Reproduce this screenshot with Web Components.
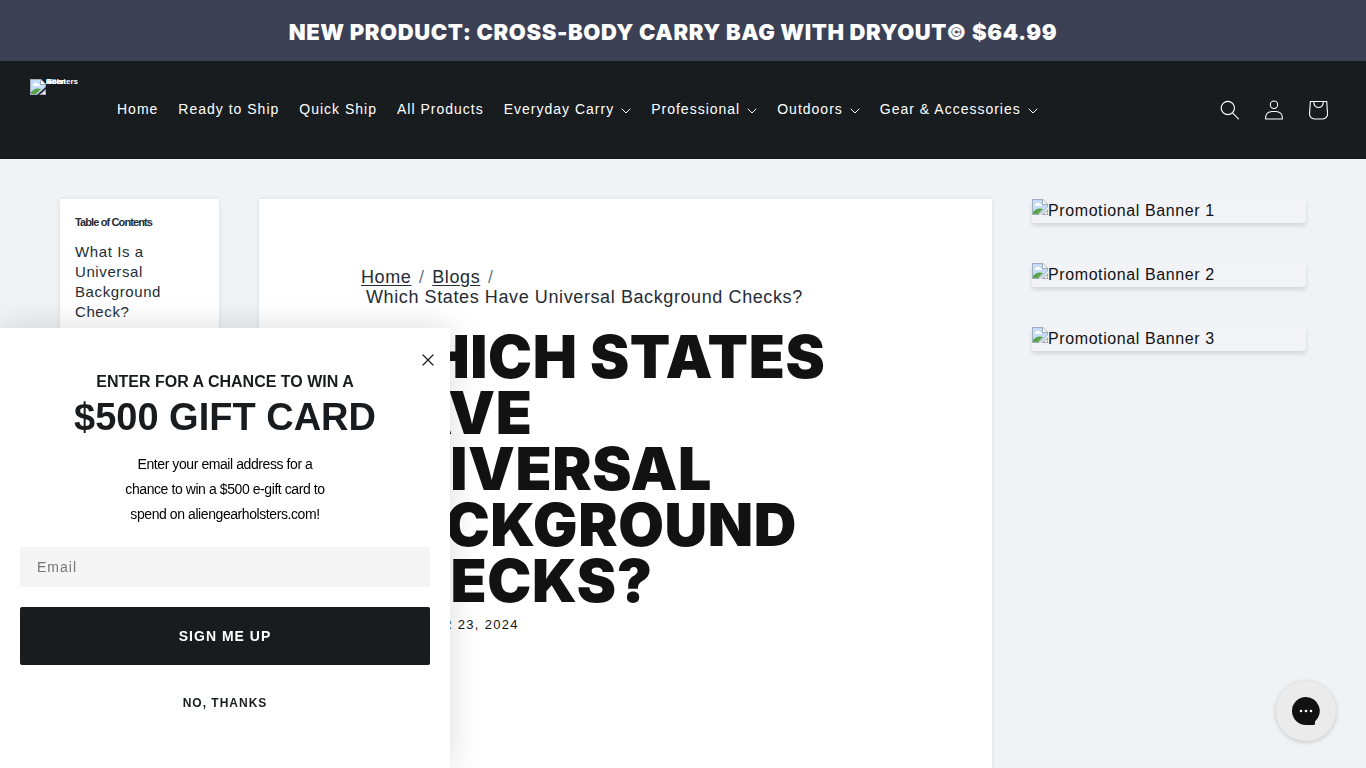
<!DOCTYPE html>
<html lang="en">
<head>
<meta charset="utf-8">
<meta name="viewport" content="width=device-width, initial-scale=1">
<title>Which States Have Universal Background Checks?</title>
<style>
	:root {
		--ink: #181c1f;
		--slate: #3b4055;
		--page: #f0f3f6;
		--text: #242c36;
		--font-body: "Liberation Sans", Arial, sans-serif;
		--font-heading: Inter, "Arial Black", sans-serif;
	}
	body {
		margin: 0;
		background: var(--page);
		color: var(--text);
		font-family: var(--font-body);
		font-size: 15px;
		letter-spacing: 0.04em;
		overflow: hidden;
	}
	.layout {
		display: grid;
		grid-template-columns: 159px minmax(0, 1fr) 274px;
		gap: 40px;
		padding: 40px 60px 0;
	}
	.banners {
		display: flex;
		flex-direction: column;
		gap: 40px;
	}
</style>
</head>
<body>
<announcement-bar>New product: Cross-body carry bag with DryOut© $64.99</announcement-bar>
<site-header>
	<nav-item>Home</nav-item>
	<nav-item>Ready to Ship</nav-item>
	<nav-item>Quick Ship</nav-item>
	<nav-item>All Products</nav-item>
	<nav-item menu>Everyday Carry</nav-item>
	<nav-item menu>Professional</nav-item>
	<nav-item menu>Outdoors</nav-item>
	<nav-item menu>Gear &amp; Accessories</nav-item>
</site-header>
<main class="layout">
	<table-of-contents>What Is a Universal Background Check?</table-of-contents>
	<blog-article date="September 23, 2024">Which States Have Universal Background Checks?</blog-article>
	<aside class="banners">
		<promo-banner>Promotional Banner 1</promo-banner>
		<promo-banner>Promotional Banner 2</promo-banner>
		<promo-banner>Promotional Banner 3</promo-banner>
	</aside>
</main>
<signup-popup></signup-popup>
<chat-launcher></chat-launcher>

<script>
class BaseElement extends HTMLElement {
	constructor() {
		super();

		this.attachShadow({ mode: "open" });
		this.shadowRoot.appendChild(this.constructor.template.content.cloneNode(true));
	}

	static get template() {
		const tmpl = document.createElement("template");
		tmpl.innerHTML = this.markup;
		return tmpl;
	}
}

class MissingImageElement extends BaseElement {
	static get markup() {
		return /* html */`
		<style>
		:host {
			display: block;
			flex: none;
			width: 16px;
			height: 16px;
		}
		svg {
			display: block;
		}
		</style>
		<svg width="16" height="16" viewBox="0 0 16 16" aria-hidden="true">
			<path d="M0 0h11l5 5v3l-9 8H0z" fill="#a3adbd"/>
			<path d="M1 1h9v5h5v2l-8 7H1z" fill="#c5dcf8"/>
			<path d="M11 1l4 4h-4z" fill="#fff"/>
			<path d="M3 6q0-2 2-2 2-1 3 1 2 0 2 2H3z" fill="#fff"/>
			<path d="M1 15v-2q4-5 10-3l-5 5z" fill="#55a344"/>
			<path d="M16 10v6H9z" fill="#a3adbd"/>
			<path d="M15 12v3h-3z" fill="#fff"/>
		</svg>
		`;
	}
}

class AnnouncementBarElement extends BaseElement {
	static get markup() {
		return /* html */`
		<style>
		:host {
			display: block;
			padding: 18px 20px 14px 0;
			background: var(--slate);
			color: #fff;
			text-align: center;
		}
		p {
			margin: 0;
			font: 900 22px/29px var(--font-heading);
			text-transform: uppercase;
		}
		</style>
		<p><slot></slot></p>
		`;
	}
}

class SiteHeaderElement extends BaseElement {
	static get markup() {
		return /* html */`
		<style>
		:host {
			display: flex;
			align-items: center;
			box-sizing: border-box;
			min-height: 98px;
			padding: 0 26px 0 30px;
			background: var(--ink);
			color: #fff;
		}
		.logo {
			display: flex;
			align-self: flex-start;
			width: 47px;
			margin: 18px 30px 0 0;
			color: #fff;
			font-size: 8px;
			font-weight: bold;
			line-height: 0;
			letter-spacing: 0;
			text-decoration: none;
		}
		.logo span {
			padding-top: 3px;
		}
		nav {
			display: flex;
			flex: 1;
		}
		.icons {
			display: flex;
		}
		button {
			display: grid;
			place-items: center;
			width: 44px;
			height: 44px;
			padding: 0;
			border: 0;
			background: none;
			color: inherit;
		}
		svg {
			fill: currentColor;
		}
		</style>
		<a class="logo" href="#"><missing-image></missing-image><span>Alien Gear Holsters</span></a>
		<nav><slot></slot></nav>
		<div class="icons">
			<button aria-label="Search">
				<svg width="20" height="20" viewBox="0 0 18 19"><path fill-rule="evenodd" d="M11.03 11.68A5.784 5.784 0 1 1 2.85 3.5a5.784 5.784 0 0 1 8.18 8.18zm.26 1.12a6.78 6.78 0 1 1 .72-.7l5.4 5.4a.5.5 0 1 1-.71.7l-5.41-5.4z"/></svg>
			</button>
			<button aria-label="Log in">
				<svg width="20" height="20" viewBox="0 0 18 19"><path fill-rule="evenodd" d="M6 4.5a3 3 0 1 1 6 0 3 3 0 0 1-6 0zm3-4a4 4 0 1 0 0 8 4 4 0 0 0 0-8zm5.58 12.15c1.12.82 1.83 2.24 1.91 4.85H1.51c.08-2.6.79-4.03 1.9-4.85C4.66 11.75 6.5 11.5 9 11.5s4.35.26 5.58 1.15zM9 10.5c-2.5 0-4.65.24-6.17 1.35C1.27 12.98.5 14.93.5 18v.5h17V18c0-3.07-.77-5.02-2.33-6.15-1.52-1.1-3.67-1.35-6.17-1.35z"/></svg>
			</button>
			<button aria-label="Cart">
				<svg width="44" height="44" viewBox="0 0 40 40"><path fill-rule="evenodd" d="M15.75 11.8h-3.16l-.77 11.6a5 5 0 0 0 4.99 5.34h7.38a5 5 0 0 0 4.99-5.33L28.4 11.8zm0 1h-2.22l-.71 10.67a4 4 0 0 0 3.99 4.27h7.38a4 4 0 0 0 4-4.27l-.72-10.67h-2.22v.63a4.75 4.75 0 1 1-9.5 0zm8.5 0h-7.5v.63a3.75 3.75 0 1 0 7.5 0z"/></svg>
			</button>
		</div>
		`;
	}
}

class NavItemElement extends BaseElement {
	static get markup() {
		return /* html */`
		<style>
		:host {
			display: block;
		}
		a {
			display: flex;
			align-items: center;
			gap: 7px;
			padding: 0 10px 2px;
			color: #fff;
			font-size: 14px;
			line-height: 18px;
			letter-spacing: 1px;
			text-decoration: none;
			white-space: nowrap;
		}
		svg {
			display: none;
			margin-top: 3px;
		}
		:host([menu]) svg {
			display: block;
		}
		</style>
		<a href="#"><slot></slot><svg width="10" height="6" viewBox="0 0 10 6" aria-hidden="true"><path d="M1 1l4 4 4-4" fill="none" stroke="currentColor" stroke-linecap="round"/></svg></a>
		`;
	}
}

class TableOfContentsElement extends BaseElement {
	static get markup() {
		return /* html */`
		<style>
		:host {
			display: block;
			padding: 15px;
			background: #fff;
			box-shadow: 0 0 4px rgba(0, 0, 0, 0.1);
		}
		h2 {
			margin: 0 0 12px;
			font-size: 11px;
			line-height: 16px;
			letter-spacing: -0.08em;
		}
		a {
			display: block;
			color: inherit;
			font-size: 15px;
			line-height: 20px;
			text-decoration: none;
		}
		</style>
		<h2>Table of Contents</h2>
		<a href="#"><slot></slot></a>
		`;
	}
}

class BlogArticleElement extends BaseElement {
	connectedCallback() {
		this.shadowRoot.getElementById("crumb").textContent = this.textContent;
		this.shadowRoot.getElementById("date").textContent = this.getAttribute("date");
	}

	static get markup() {
		return /* html */`
		<style>
		:host {
			display: block;
			padding: 68px 102px 140px;
			background: #fff;
			box-shadow: 0 0 4px rgba(0, 0, 0, 0.1);
		}
		nav {
			font-size: 18px;
			line-height: 20px;
		}
		a {
			color: inherit;
			text-underline-offset: 2px;
		}
		i {
			padding: 0 2px;
			color: #6c757d;
			font-style: normal;
		}
		#crumb {
			display: inline-block;
			margin-left: 5px;
		}
		h1 {
			margin: 22px 0 8px;
			color: #121212;
			font: 900 59px/56px var(--font-heading);
			text-transform: uppercase;
		}
		time {
			display: block;
			color: #121212;
			font-size: 13px;
			line-height: 15px;
			letter-spacing: 0.1em;
			text-transform: uppercase;
		}
		</style>
		<nav aria-label="Breadcrumb"><a href="#">Home</a> <i>/</i> <a href="#">Blogs</a> <i>/</i> <span id="crumb"></span></nav>
		<h1><slot></slot></h1>
		<time id="date"></time>
		`;
	}
}

class PromoBannerElement extends BaseElement {
	static get markup() {
		return /* html */`
		<style>
		:host {
			display: flex;
			height: 24px;
			border-radius: 2px;
			background: #f1f3f7;
			box-shadow: 0 3px 4px rgba(0, 0, 0, 0.12);
			color: #121212;
			font-size: 16px;
			line-height: 24px;
		}
		</style>
		<missing-image></missing-image><slot></slot>
		`;
	}
}

class SignupPopupElement extends BaseElement {
	static get markup() {
		return /* html */`
		<style>
		:host {
			position: fixed;
			left: 0;
			bottom: 0;
			box-sizing: border-box;
			width: 450px;
			padding: 44px 20px 55px;
			background: #fff;
			box-shadow: 0 0 30px rgba(0, 0, 0, 0.15);
			color: var(--ink);
			text-align: center;
			letter-spacing: 0;
		}
		h2 {
			margin: 0;
			font-size: 16px;
			line-height: 20px;
		}
		h2 strong {
			display: block;
			font-size: 38px;
			line-height: 50px;
		}
		p {
			width: 210px;
			margin: 10px auto 20px;
			color: #000;
			font-size: 14px;
			line-height: 25px;
			letter-spacing: -0.03em;
		}
		input, button {
			display: block;
			box-sizing: border-box;
			width: 100%;
			border: 0;
			font-family: inherit;
			letter-spacing: 1px;
		}
		input {
			height: 40px;
			margin-bottom: 20px;
			padding: 0 17px;
			background: #f4f4f4;
			font-size: 14px;
		}
		input::placeholder {
			color: #757575;
		}
		.submit {
			height: 58px;
			border-radius: 2px;
			background: var(--ink);
			color: #fff;
			font-size: 14px;
			font-weight: bold;
		}
		.decline {
			margin-top: 28px;
			padding: 0;
			background: none;
			color: var(--ink);
			font-size: 12px;
			font-weight: bold;
			line-height: 20px;
		}
		.close {
			position: absolute;
			top: 20px;
			right: 10px;
			display: grid;
			place-items: center;
			width: 24px;
			height: 24px;
			padding: 0;
			background: none;
		}
		</style>
		<form>
			<h2>ENTER FOR A CHANCE TO WIN A <strong>$500 GIFT CARD</strong></h2>
			<p>Enter your email address for a chance to win a $500 e-gift card to spend on aliengearholsters.com!</p>
			<input type="email" placeholder="Email" aria-label="Email">
			<button class="submit" type="submit">SIGN ME UP</button>
			<button class="decline" type="button">NO, THANKS</button>
			<button class="close" type="button" aria-label="Close">
				<svg width="12" height="12" viewBox="0 0 12 12"><path d="M1 1l10 10M11 1L1 11" stroke="#181c1f" stroke-width="1.2" stroke-linecap="round"/></svg>
			</button>
		</form>
		`;
	}
}

class ChatLauncherElement extends BaseElement {
	static get markup() {
		return /* html */`
		<style>
		:host {
			position: fixed;
			right: 30px;
			bottom: 27px;
		}
		button {
			display: grid;
			place-items: center;
			width: 60px;
			height: 60px;
			padding: 0;
			border: 0;
			border-radius: 50%;
			background: #ebebeb;
			box-shadow: 0 1px 5px rgba(0, 0, 0, 0.2);
		}
		</style>
		<button aria-label="Open chat">
			<svg width="28" height="28" viewBox="0 0 28 28">
				<path d="M14 0a14 14 0 1 0 0 28h7.500q1.500 0 1.500-1.500v-2A14 14 0 0 0 14 0z" fill="#121212"/>
				<g fill="#fff"><circle cx="9" cy="14" r="1.300"/><circle cx="14" cy="14" r="1.300"/><circle cx="19" cy="14" r="1.300"/></g>
			</svg>
		</button>
		`;
	}
}

window.customElements.define("missing-image", MissingImageElement);
window.customElements.define("announcement-bar", AnnouncementBarElement);
window.customElements.define("nav-item", NavItemElement);
window.customElements.define("site-header", SiteHeaderElement);
window.customElements.define("table-of-contents", TableOfContentsElement);
window.customElements.define("blog-article", BlogArticleElement);
window.customElements.define("promo-banner", PromoBannerElement);
window.customElements.define("signup-popup", SignupPopupElement);
window.customElements.define("chat-launcher", ChatLauncherElement);
</script>
</body>
</html>
